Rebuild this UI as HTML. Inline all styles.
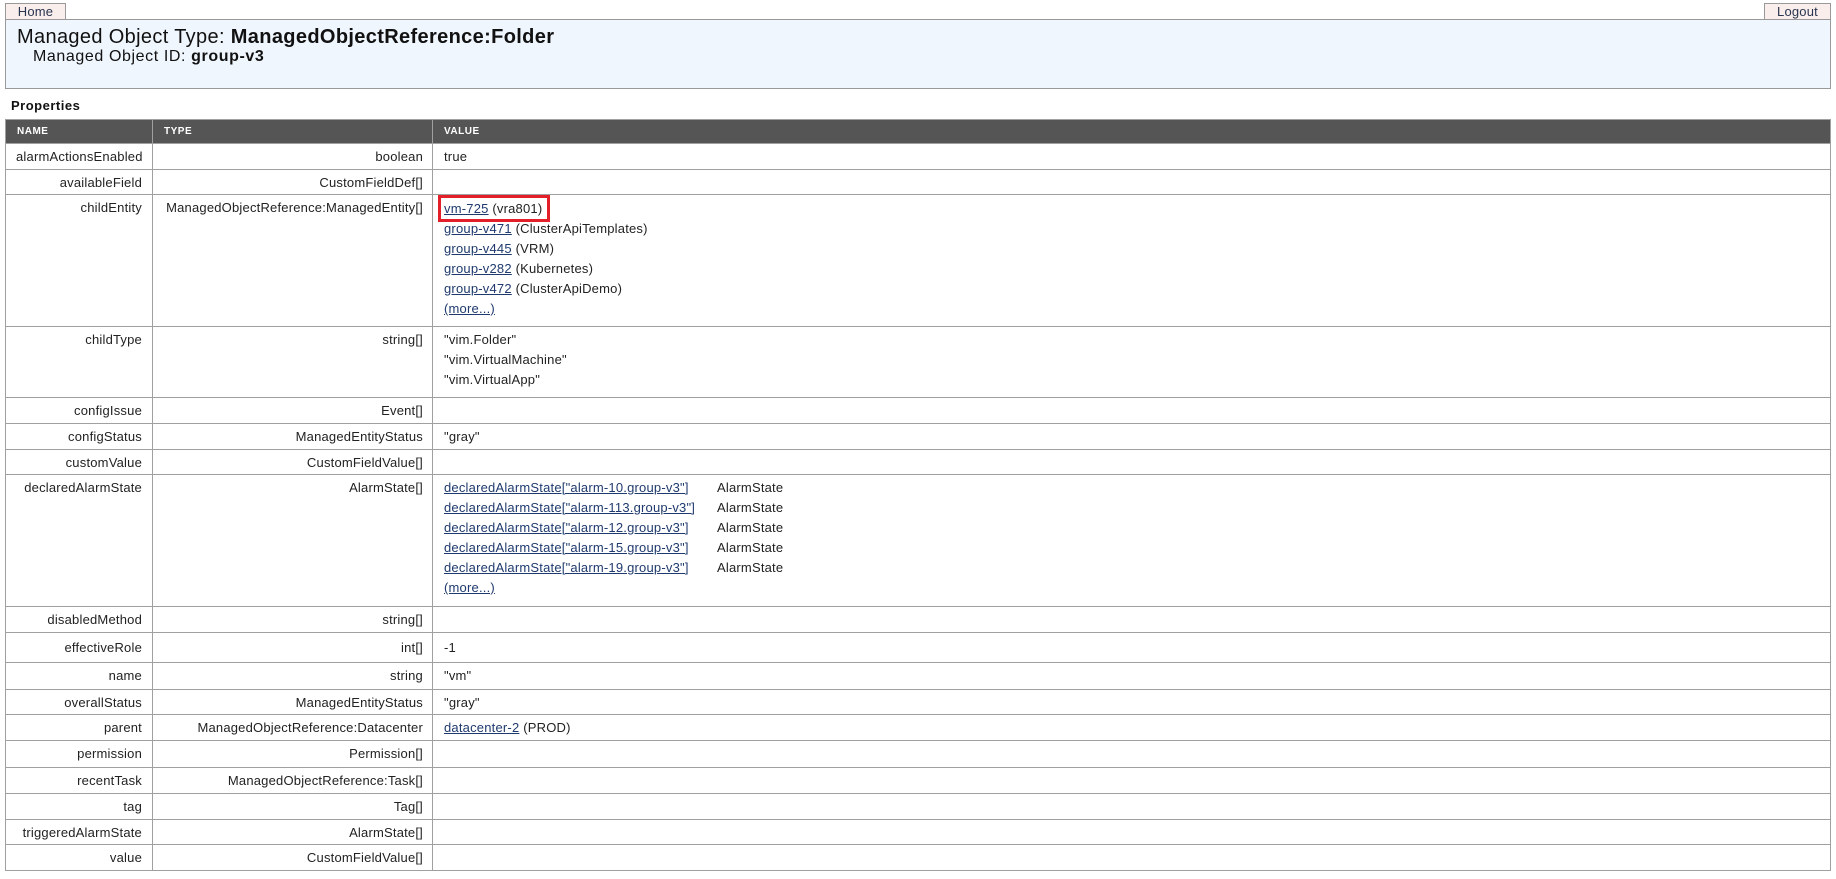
<!DOCTYPE html>
<html><head><meta charset="utf-8">
<style>
*{box-sizing:border-box}
body{margin:0;width:1836px;height:879px;background:#fff;font-family:"Liberation Sans",sans-serif;font-size:13px;color:#222;position:relative;overflow:hidden;letter-spacing:0.2px}
.tab{position:absolute;top:3px;height:17px;background:#f9eeec;border:1px solid #999;border-bottom:none;font-size:13px;line-height:16px;text-align:center;color:#2a3550}
.hdr{position:absolute;left:5px;top:19px;width:1826px;height:70px;background:#f0f6fe;border:1px solid #999}
.t1{position:absolute;left:11px;top:6px;font-size:20px;color:#111;letter-spacing:0.35px}
.t2{position:absolute;left:27px;top:28px;font-size:16px;color:#111;letter-spacing:0.6px}
.props{position:absolute;left:11px;top:98px;font-weight:bold;font-size:13px;color:#111;letter-spacing:0.5px}
table{position:absolute;left:5px;top:119px;width:1826px;border-collapse:collapse;table-layout:fixed}
td,th{border:1px solid #a0a0a0;padding:3px 10px 0 10px;vertical-align:top;line-height:20px}
td.t{padding-right:9px;padding-left:4px;white-space:nowrap}
th{background:#555;color:#fff;font-size:10px;font-weight:bold;text-align:left;height:24px;padding-top:2px;padding-left:11px;letter-spacing:0.5px}
td.n,td.t{text-align:right}
td.v{padding-left:11px}
a{color:#1f3a6e;text-decoration:underline}
.red{display:inline-block;border:3px solid #e3202a;margin:-3px 0 -3px -6px;padding:0 5px 0 3px;line-height:21px}
.as{display:inline-block;width:273px}
</style></head><body>
<div class="tab" style="left:5px;width:61px">Home</div>
<div class="tab" style="left:1764px;width:67px">Logout</div>
<div class="hdr">
<div class="t1">Managed Object Type: <b>ManagedObjectReference:Folder</b></div>
<div class="t2">Managed Object ID: <b>group-v3</b></div>
</div>
<div class="props">Properties</div>
<table>
<colgroup><col style="width:147px"><col style="width:280px"><col></colgroup>
<tr><th>NAME</th><th>TYPE</th><th>VALUE</th></tr>
<tr style="height:26px"><td class="n">alarmActionsEnabled</td><td class="t">boolean</td><td class="v">true</td></tr>
<tr style="height:25px"><td class="n">availableField</td><td class="t">CustomFieldDef[]</td><td class="v"></td></tr>
<tr style="height:132px"><td class="n">childEntity</td><td class="t">ManagedObjectReference:ManagedEntity[]</td><td class="v"><span class="red"><a>vm-725</a> (vra801)</span><br><a>group-v471</a> (ClusterApiTemplates)<br><a>group-v445</a> (VRM)<br><a>group-v282</a> (Kubernetes)<br><a>group-v472</a> (ClusterApiDemo)<br><a>(more...)</a></td></tr>
<tr style="height:71px"><td class="n">childType</td><td class="t">string[]</td><td class="v">"vim.Folder"<br>"vim.VirtualMachine"<br>"vim.VirtualApp"</td></tr>
<tr style="height:26px"><td class="n">configIssue</td><td class="t">Event[]</td><td class="v"></td></tr>
<tr style="height:26px"><td class="n">configStatus</td><td class="t">ManagedEntityStatus</td><td class="v">"gray"</td></tr>
<tr style="height:25px"><td class="n">customValue</td><td class="t">CustomFieldValue[]</td><td class="v"></td></tr>
<tr style="height:132px"><td class="n">declaredAlarmState</td><td class="t">AlarmState[]</td><td class="v"><span class="as"><a>declaredAlarmState["alarm-10.group-v3"]</a></span>AlarmState<br><span class="as"><a>declaredAlarmState["alarm-113.group-v3"]</a></span>AlarmState<br><span class="as"><a>declaredAlarmState["alarm-12.group-v3"]</a></span>AlarmState<br><span class="as"><a>declaredAlarmState["alarm-15.group-v3"]</a></span>AlarmState<br><span class="as"><a>declaredAlarmState["alarm-19.group-v3"]</a></span>AlarmState<br><a>(more...)</a></td></tr>
<tr style="height:26px"><td class="n">disabledMethod</td><td class="t">string[]</td><td class="v"></td></tr>
<tr style="height:30px"><td class="n" style="padding-top:5px">effectiveRole</td><td class="t" style="padding-top:5px">int[]</td><td class="v" style="padding-top:5px">-1</td></tr>
<tr style="height:27px"><td class="n">name</td><td class="t">string</td><td class="v">"vm"</td></tr>
<tr style="height:25px"><td class="n">overallStatus</td><td class="t">ManagedEntityStatus</td><td class="v">"gray"</td></tr>
<tr style="height:26px"><td class="n">parent</td><td class="t">ManagedObjectReference:Datacenter</td><td class="v"><a>datacenter-2</a> (PROD)</td></tr>
<tr style="height:27px"><td class="n">permission</td><td class="t">Permission[]</td><td class="v"></td></tr>
<tr style="height:26px"><td class="n">recentTask</td><td class="t">ManagedObjectReference:Task[]</td><td class="v"></td></tr>
<tr style="height:26px"><td class="n">tag</td><td class="t">Tag[]</td><td class="v"></td></tr>
<tr style="height:25px"><td class="n">triggeredAlarmState</td><td class="t">AlarmState[]</td><td class="v"></td></tr>
<tr style="height:26px"><td class="n">value</td><td class="t">CustomFieldValue[]</td><td class="v"></td></tr>
</table>
</body></html>
